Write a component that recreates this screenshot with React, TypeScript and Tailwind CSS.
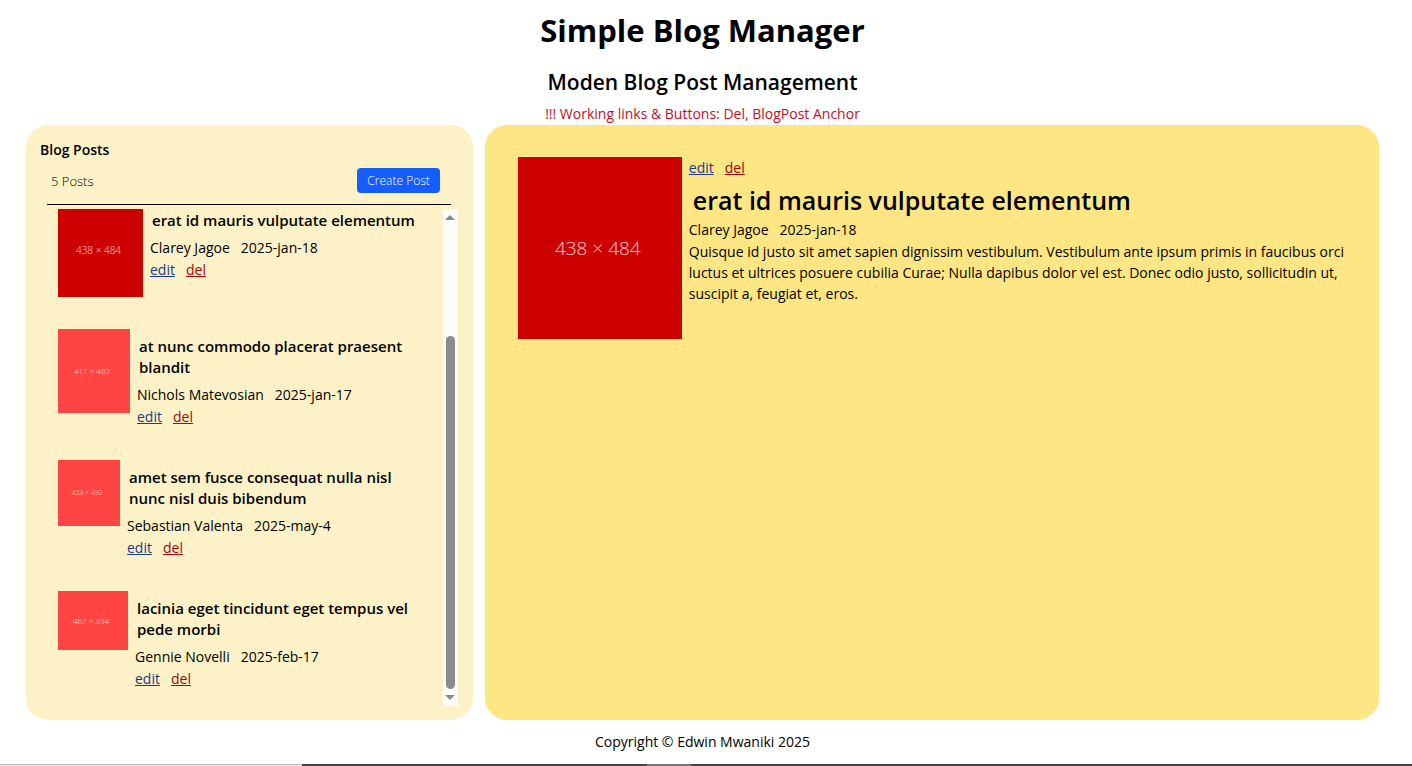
import React from "react";

type Post = {
  title: string;
  author: string;
  date: string;
  size: string;
  thumb: string;
};

const posts: Post[] = [
  {
    title: "erat id mauris vulputate elementum",
    author: "Clarey Jagoe",
    date: "2025-jan-18",
    size: "438 × 484",
    thumb: "h-[94px] w-[85px] bg-[#cc0000] text-[10px]",
  },
  {
    title: "at nunc commodo placerat praesent blandit",
    author: "Nichols Matevosian",
    date: "2025-jan-17",
    size: "411 × 482",
    thumb: "h-[84px] w-[72px] bg-[#ff4444] text-[8px]",
  },
  {
    title: "amet sem fusce consequat nulla nisl nunc nisl duis bibendum",
    author: "Sebastian Valenta",
    date: "2025-may-4",
    size: "453 × 492",
    thumb: "h-[66px] w-[62px] bg-[#ff4444] text-[7px]",
  },
  {
    title: "lacinia eget tincidunt eget tempus vel pede morbi",
    author: "Gennie Novelli",
    date: "2025-feb-17",
    size: "467 × 394",
    thumb: "h-[59px] w-[70px] bg-[#ff4444] text-[8px]",
  },
];

function Placeholder({ size, className }: { size: string; className: string }) {
  return (
    <div className={`flex shrink-0 items-center justify-center pr-1 font-light text-white/80 ${className}`}>
      {size}
    </div>
  );
}

function Actions() {
  return (
    <div className="flex gap-[11px]">
      <a href="#edit" className="text-[#1c398e] underline">edit</a>
      <a href="#del" className="text-[#9f0712] underline">del</a>
    </div>
  );
}

function Byline({ post }: { post: Post }) {
  return (
    <p className="flex gap-[11px]">
      <span>{post.author}</span>
      <span>{post.date}</span>
    </p>
  );
}

function PostItem({ post }: { post: Post }) {
  return (
    <li className="flex items-start gap-[7px]">
      <Placeholder size={post.size} className={post.thumb} />
      <div className="min-w-0 flex-1 pt-[7px]">
        <h3 className="mb-1.5 pl-0.5 text-[15px] leading-[21px] font-semibold">{post.title}</h3>
        <Byline post={post} />
        <Actions />
      </div>
    </li>
  );
}

function ScrollTrack() {
  return (
    <div aria-hidden="true" className="flex w-[15px] shrink-0 flex-col items-center bg-[#fcfcfc] py-1.5 text-[#8b8b8b]">
      <svg viewBox="0 0 10 5" className="h-[5px] w-[10px]" fill="currentColor">
        <path d="M0 5 5 0l5 5z" />
      </svg>
      <div className="mt-[116px] w-[9px] flex-1 rounded-full bg-[#8b8b8b]" />
      <svg viewBox="0 0 10 5" className="mt-1.5 h-[5px] w-[10px]" fill="currentColor">
        <path d="M0 0h10L5 5z" />
      </svg>
    </div>
  );
}

export default function App() {
  const current = posts[0];
  return (
    <div className="flex min-h-screen flex-col bg-white font-['Open_Sans',sans-serif] text-[14px] leading-[22px] text-black">
      <header className="pt-2 pr-[7px] text-center">
        <h1 className="text-[31px] leading-[44px] font-bold">Simple Blog Manager</h1>
        <h2 className="mt-[15px] text-[21px] leading-[30px] font-semibold">Moden Blog Post Management</h2>
        <p className="mt-1.5 text-[#c10f25]">!!! Working links &amp; Buttons: Del, BlogPost Anchor</p>
      </header>

      <main className="flex flex-1 gap-3 pr-[33px] pl-[26px]">
        <section className="flex w-1/3 flex-col rounded-[22px] bg-[#fdf2c7] pt-3.5 pb-3.5">
          <h2 className="pl-3.5 font-semibold">Blog Posts</h2>
          <div className="mr-[22px] ml-[21px] flex items-center justify-between border-b border-black pt-[7px] pr-[11px] pb-[11px] pl-1">
            <span className="text-[13px] font-light">5 Posts</span>
            <button type="button" className="rounded-[4px] bg-[#155dfc] px-2.5 text-[12px] leading-[25px] font-light text-white">
              Create Post
            </button>
          </div>
          <div className="mt-1 mr-[15px] ml-8 flex flex-1 overflow-hidden">
            <ul className="-mt-1.5 flex min-w-0 flex-1 flex-col gap-8 pr-3.5">
              {posts.map((post) => (
                <PostItem key={post.title} post={post} />
              ))}
            </ul>
            <ScrollTrack />
          </div>
        </section>

        <section className="w-2/3 rounded-[22px] bg-[#fee685] px-[33px] py-8">
          <article className="flex items-start gap-[7px]">
            <Placeholder size={current.size} className="h-[182px] w-[164px] bg-[#cc0000] text-[19px]" />
            <div className="min-w-0 flex-1">
              <Actions />
              <h2 className="pt-[5px] pb-[3px] pl-1 text-[25px] leading-[32px] font-semibold">{current.title}</h2>
              <Byline post={current} />
              <p className="leading-[21px]">
                Quisque id justo sit amet sapien dignissim vestibulum. Vestibulum ante ipsum primis in faucibus orci
                luctus et ultrices posuere cubilia Curae; Nulla dapibus dolor vel est. Donec odio justo, sollicitudin
                ut, suscipit a, feugiat et, eros.
              </p>
            </div>
          </article>
        </section>
      </main>

      <footer>
        <p className="py-[11px] pr-[7px] text-center">Copyright © Edwin Mwaniki 2025</p>
        <div className="flex h-0.5">
          <div className="w-[302px] border-t border-[#b8b8b8] bg-[#eeeeee]" />
          <div className="w-[345px] bg-[#444444]" />
          <div className="w-11 bg-[#777777]" />
          <div className="flex-1 bg-[#444444]" />
        </div>
      </footer>
    </div>
  );
}
